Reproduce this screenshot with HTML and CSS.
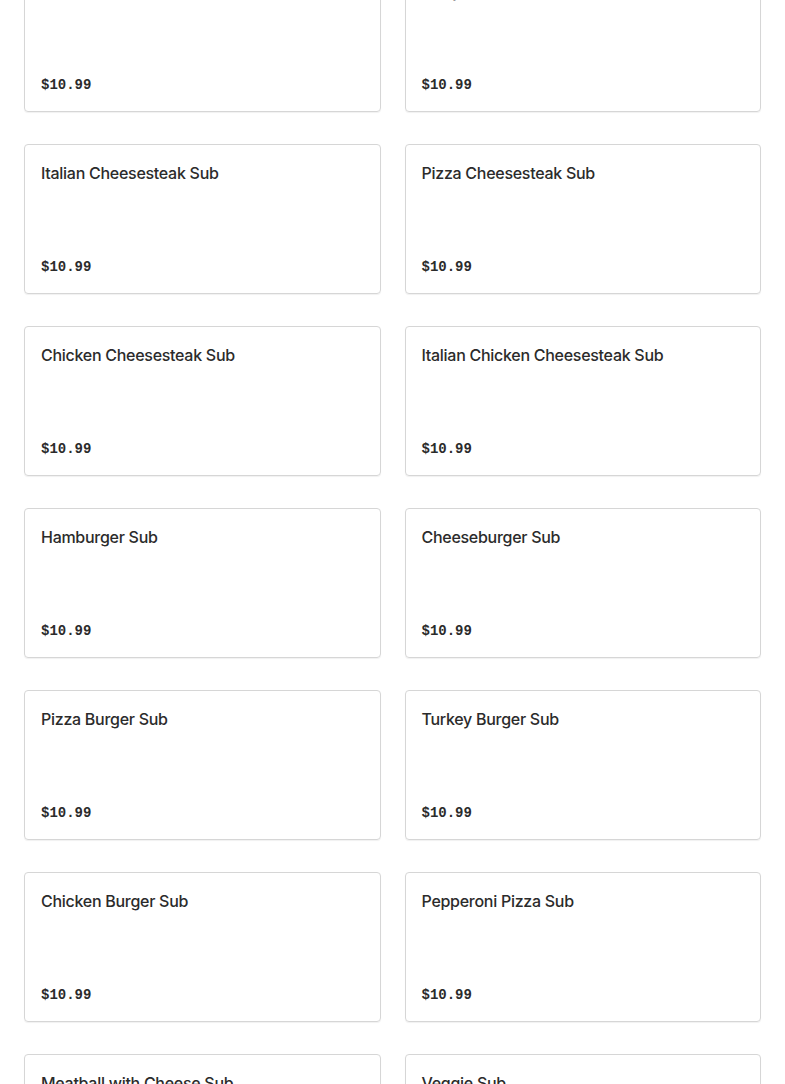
FILE: index.html
```html
<!DOCTYPE html>
<html>
<head>
<meta charset="utf-8">
<link rel="stylesheet" href="styles.css">
</head>
<body>
<div class="menu">
  <div class="card"><div class="title">Steak Sub</div><div class="price">$10.99</div></div>
  <div class="card"><div class="title">Philly Steak Sub</div><div class="price">$10.99</div></div>
  <div class="card"><div class="title">Italian Cheesesteak Sub</div><div class="price">$10.99</div></div>
  <div class="card"><div class="title">Pizza Cheesesteak Sub</div><div class="price">$10.99</div></div>
  <div class="card"><div class="title">Chicken Cheesesteak Sub</div><div class="price">$10.99</div></div>
  <div class="card"><div class="title">Italian Chicken Cheesesteak Sub</div><div class="price">$10.99</div></div>
  <div class="card"><div class="title">Hamburger Sub</div><div class="price">$10.99</div></div>
  <div class="card"><div class="title">Cheeseburger Sub</div><div class="price">$10.99</div></div>
  <div class="card"><div class="title">Pizza Burger Sub</div><div class="price">$10.99</div></div>
  <div class="card"><div class="title">Turkey Burger Sub</div><div class="price">$10.99</div></div>
  <div class="card"><div class="title">Chicken Burger Sub</div><div class="price">$10.99</div></div>
  <div class="card"><div class="title">Pepperoni Pizza Sub</div><div class="price">$10.99</div></div>
  <div class="card"><div class="title">Meatball with Cheese Sub</div><div class="price">$10.99</div></div>
  <div class="card"><div class="title">Veggie Sub</div><div class="price">$10.99</div></div>
</div>
</body>
</html>
```
FILE: styles.css
```css
html, body {
  margin: 0;
  padding: 0;
  background: #ffffff;
  overflow: hidden;
}
.menu {
  display: grid;
  grid-template-columns: 1fr 1fr;
  column-gap: 24px;
  row-gap: 32px;
  padding: 0 24px;
  margin-top: -38px;
}
.card {
  box-sizing: border-box;
  height: 150px;
  border: 1px solid #d6d6d6;
  border-radius: 4px;
  box-shadow: 0 1px 1px rgba(0,0,0,0.06);
  padding: 16px 16px 16px 16px;
  display: flex;
  flex-direction: column;
  justify-content: space-between;
}
.title {
  font-family: Inter, "Liberation Sans", sans-serif;
  font-size: 16px;
  font-weight: 500;
  line-height: 24px;
  color: #2b2b2b;
  letter-spacing: -0.28px;
}
.price {
  font-family: "Liberation Mono", "DejaVu Sans Mono", monospace;
  font-size: 14px;
  font-weight: bold;
  line-height: 20px;
  color: #2b2b2b;
}
```
